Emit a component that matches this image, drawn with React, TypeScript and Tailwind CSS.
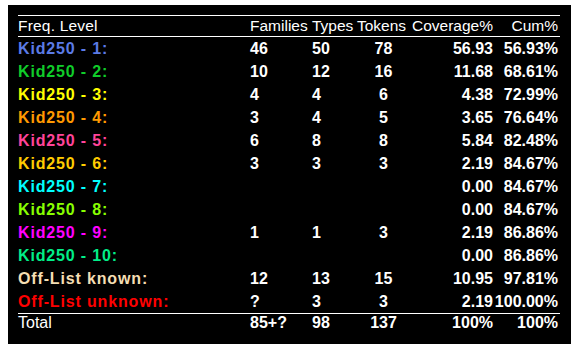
import React from "react";

type Row = {
  label: string;
  color: string;
  fam: string;
  types: string;
  tokens: string;
  cov: string;
  cum: string;
};

const rows: Row[] = [
  { label: "Kid250 - 1:", color: "text-[#5b7be6]", fam: "46", types: "50", tokens: "78", cov: "56.93", cum: "56.93%" },
  { label: "Kid250 - 2:", color: "text-[#10cc2a]", fam: "10", types: "12", tokens: "16", cov: "11.68", cum: "68.61%" },
  { label: "Kid250 - 3:", color: "text-[#ffff00]", fam: "4", types: "4", tokens: "6", cov: "4.38", cum: "72.99%" },
  { label: "Kid250 - 4:", color: "text-[#ff9900]", fam: "3", types: "4", tokens: "5", cov: "3.65", cum: "76.64%" },
  { label: "Kid250 - 5:", color: "text-[#ff4499]", fam: "6", types: "8", tokens: "8", cov: "5.84", cum: "82.48%" },
  { label: "Kid250 - 6:", color: "text-[#ffcc00]", fam: "3", types: "3", tokens: "3", cov: "2.19", cum: "84.67%" },
  { label: "Kid250 - 7:", color: "text-[#00ffff]", fam: "", types: "", tokens: "", cov: "0.00", cum: "84.67%" },
  { label: "Kid250 - 8:", color: "text-[#88ff00]", fam: "", types: "", tokens: "", cov: "0.00", cum: "84.67%" },
  { label: "Kid250 - 9:", color: "text-[#ff00ff]", fam: "1", types: "1", tokens: "3", cov: "2.19", cum: "86.86%" },
  { label: "Kid250 - 10:", color: "text-[#00ee88]", fam: "", types: "", tokens: "", cov: "0.00", cum: "86.86%" },
  { label: "Off-List known:", color: "text-[#f5deb3]", fam: "12", types: "13", tokens: "15", cov: "10.95", cum: "97.81%" },
  { label: "Off-List unknown:", color: "text-[#ff0000]", fam: "?", types: "3", tokens: "3", cov: "2.19", cum: "100.00%" },
];

export default function App() {
  return (
    <div className="w-[581px] h-[354px] bg-white pt-[5px] pl-[8px]">
      <div
        className="w-[563px] h-[339px] bg-black px-[10px] pt-[10px] text-white"
        style={{ fontFamily: '"Liberation Sans", Arial, sans-serif' }}
      >
        <div className="w-[542px] border-t border-white">
          <div className="flex h-[21px] items-start border-b border-white text-[15.5px] leading-[20px]">
            <div className="w-[232px] tracking-[0.2px]">Freq. Level</div>
            <div className="w-[62px]">Families</div>
            <div className="w-[45px]">Types</div>
            <div className="w-[53px]">Tokens</div>
            <div className="w-[83px] text-right">Coverage%</div>
            <div className="w-[65px] text-right">Cum%</div>
          </div>
          {rows.map((r) => (
            <div key={r.label} className="flex h-[23px] items-baseline font-bold text-[16px] leading-[23px]">
              <div className={`w-[232px] tracking-[0.85px] ${r.color}`}>{r.label}</div>
              <div className="w-[62px]">{r.fam}</div>
              <div className="w-[45px]">{r.types}</div>
              <div className="w-[53px] text-center">{r.tokens}</div>
              <div className="w-[83px] text-right">{r.cov}</div>
              <div className="w-[65px] text-right">{r.cum}</div>
            </div>
          ))}
          <div className="flex h-[20px] items-start border-t border-white text-[16px] leading-[17px]">
            <div className="w-[232px]">Total</div>
            <div className="w-[62px] font-bold">85+?</div>
            <div className="w-[45px] font-bold">98</div>
            <div className="w-[53px] text-center font-bold">137</div>
            <div className="w-[83px] text-right font-bold">100%</div>
            <div className="w-[65px] text-right font-bold">100%</div>
          </div>
        </div>
      </div>
    </div>
  );
}
